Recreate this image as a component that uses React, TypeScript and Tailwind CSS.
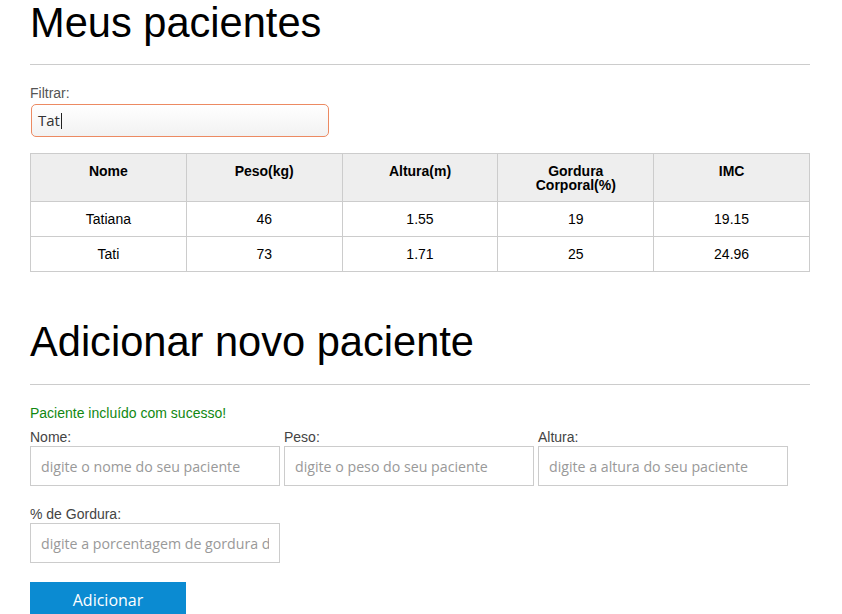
import React from 'react';

const pacientes = [
  { nome: 'Tatiana', peso: '46', altura: '1.55', gordura: '19', imc: '19.15' },
  { nome: 'Tati', peso: '73', altura: '1.71', gordura: '25', imc: '24.96' },
];

const arial = "font-['Liberation_Sans',Arial,sans-serif]";
const ubuntu = "font-['Open_Sans','Noto_Sans',sans-serif]";

function Campo({ label, placeholder }: { label: string; placeholder: string }) {
  return (
    <div className="flex flex-col w-[250px]">
      <label className={`${arial} text-[14px] leading-[16px] text-[#444]`}>{label}</label>
      <input
        className={`${ubuntu} mt-[1px] h-[40px] w-[250px] border border-[#ccc] bg-white px-[10px] text-[14.2px] text-[#333] outline-none placeholder:text-[#999]`}
        placeholder={placeholder}
      />
    </div>
  );
}

export default function App() {
  return (
    <div className="bg-white min-h-[614px] overflow-hidden">
      <div className="ml-[30px] w-[780px] text-black">
        <h1 className={`${arial} text-[41.6px] leading-[48px] font-normal -mt-[1px]`}>Meus pacientes</h1>
        <hr className="mt-[17px] border-0 border-t border-[#ccc]" />

        <div className="mt-[20px] flex flex-col">
          <label className={`${arial} text-[14px] leading-[16px] text-[#555]`}>Filtrar:</label>
          <div
            className={`${ubuntu} mt-[3px] ml-[1px] flex h-[33px] w-[298px] items-center rounded-[5px] border border-[#ec8a62] bg-gradient-to-b from-white to-[#f2f2f2] px-[6px] text-[15px] text-[#333]`}
          >
            <span>Tat</span>
            <span className="ml-[1px] h-[16px] w-[1px] bg-[#222]" />
          </div>
        </div>

        <table className={`${arial} mt-[16px] w-[780px] table-fixed border-collapse text-[14px] text-black`}>
          <thead>
            <tr className="h-[48px] bg-[#eee]">
              {['Nome', 'Peso(kg)', 'Altura(m)', 'Gordura Corporal(%)', 'IMC'].map((h) => (
                <th
                  key={h}
                  className="border border-[#ccc] px-[24px] pt-[10px] align-top font-bold leading-[14px]"
                >
                  {h}
                </th>
              ))}
            </tr>
          </thead>
          <tbody>
            {pacientes.map((p) => (
              <tr key={p.nome} className="h-[35px]">
                <td className="border border-[#ccc] text-center">{p.nome}</td>
                <td className="border border-[#ccc] text-center">{p.peso}</td>
                <td className="border border-[#ccc] text-center">{p.altura}</td>
                <td className="border border-[#ccc] text-center">{p.gordura}</td>
                <td className="border border-[#ccc] text-center">{p.imc}</td>
              </tr>
            ))}
          </tbody>
        </table>

        <h1 className={`${arial} mt-[46px] text-[41.6px] leading-[48px] font-normal`}>Adicionar novo paciente</h1>
        <hr className="mt-[18px] border-0 border-t border-[#ccc]" />

        <p className={`${arial} mt-[20px] text-[14px] leading-[16px] text-[#118811]`}>Paciente incluído com sucesso!</p>

        <form className="mt-[8px]" onSubmit={(e) => e.preventDefault()}>
          <div className="flex gap-[4px]">
            <Campo label="Nome:" placeholder="digite o nome do seu paciente" />
            <Campo label="Peso:" placeholder="digite o peso do seu paciente" />
            <Campo label="Altura:" placeholder="digite a altura do seu paciente" />
          </div>
          <div className="mt-[20px] flex">
            <Campo label="% de Gordura:" placeholder="digite a porcentagem de gordura do seu paciente" />
          </div>
          <button
            type="submit"
            className={`${ubuntu} mt-[19px] h-[40px] w-[156px] bg-[#0b8bd2] pb-[4px] text-[16px] text-white`}
          >
            Adicionar
          </button>
        </form>
      </div>
    </div>
  );
}
